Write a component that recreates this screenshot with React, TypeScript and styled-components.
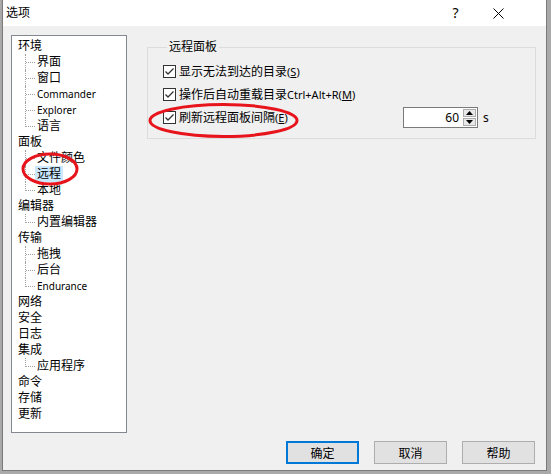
import React from "react";
import styled, { createGlobalStyle } from "styled-components";

const Global = createGlobalStyle`
  html, body { margin: 0; padding: 0; }
  body { background: #a9a9a9; font-family: "Noto Sans", "Noto Sans CJK SC", sans-serif; }
  #root { width: 551px; height: 474px; overflow: hidden; }
`;

const Desktop = styled.div`
  position: relative;
  width: 551px;
  height: 474px;
  padding-left: 2px;
  box-sizing: border-box;
  background: #a9a9a9;
`;

const Window = styled.div`
  width: 545px;
  height: 471px;
  box-sizing: border-box;
  border: 1px solid #7a7a7a;
  border-top: none;
  background: #f0f0f0;
  display: flex;
  flex-direction: column;
  font-family: "Noto Sans", "Noto Sans CJK SC", sans-serif;
  font-size: 12px;
  line-height: 16px;
  color: #000;
`;

const TitleBar = styled.div`
  height: 26px;
  flex-shrink: 0;
  background: #fff;
  display: flex;
  align-items: center;
  padding-left: 3px;
  padding-right: 26px;
`;

const TitleText = styled.span`
  font-size: 12px;
  line-height: 26px;
`;

const TitleButtons = styled.div`
  margin-left: auto;
  display: flex;
`;

const TitleButton = styled.div`
  width: 43px;
  height: 26px;
  display: flex;
  align-items: center;
  justify-content: center;
  font-size: 14px;
`;

const Body = styled.div`
  flex: 1;
  display: flex;
  flex-direction: column;
  padding: 9px 10px 0 8px;
`;

const Top = styled.div`
  display: flex;
  height: 398px;
`;

const Tree = styled.div`
  width: 116px;
  height: 398px;
  box-sizing: border-box;
  border: 1px solid #828790;
  background: #fff;
  padding: 2px 0 0 6px;
`;

const Row = styled.div<{ $child?: boolean }>`
  display: flex;
  align-items: center;
  height: 16px;
  margin-left: ${(p) => (p.$child ? "7px" : "0")};
`;

const Connector = styled.span<{ $last?: boolean }>`
  position: relative;
  width: 10px;
  height: 16px;
  flex-shrink: 0;
  &::before {
    content: "";
    position: absolute;
    left: 0;
    top: 0;
    height: ${(p) => (p.$last ? "9px" : "16px")};
    border-left: 1px dotted #a0a0a0;
  }
  &::after {
    content: "";
    position: absolute;
    left: 1px;
    top: 8px;
    width: 9px;
    border-top: 1px dotted #a0a0a0;
  }
`;

const NodeLabel = styled.span<{ $child?: boolean; $selected?: boolean }>`
  padding: ${(p) => (p.$child ? "0 2px" : "0")};
  line-height: 16px;
  white-space: nowrap;
  background: ${(p) => (p.$selected ? "#cce8ff" : "transparent")};
`;

const Latin = styled.span<{ $size: number }>`
  font-size: ${(p) => p.$size}px;
`;

const Main = styled.div`
  flex: 1;
  margin-left: 20px;
  padding-top: 4px;
`;

const Group = styled.fieldset`
  margin: 0;
  padding: 5px 0 9px 15px;
  border: 1px solid #dcdcdc;
  min-width: 0;
`;

const Legend = styled.legend`
  padding: 0 2px;
  margin-left: 4px;
  line-height: 16px;
`;

const OptionRow = styled.div`
  display: flex;
  align-items: center;
  height: 23px;
`;

const CheckBox = styled.span`
  width: 13px;
  height: 13px;
  box-sizing: border-box;
  border: 1px solid #333;
  background: #fff;
  margin-right: 3px;
  flex-shrink: 0;
  display: flex;
  align-items: center;
  justify-content: center;
`;

const CheckLabel = styled.span<{ $width?: number }>`
  white-space: nowrap;
  ${(p) => (p.$width ? `width: ${p.$width}px;` : "")}
`;

const SpinBox = styled.div`
  width: 75px;
  height: 21px;
  box-sizing: border-box;
  border: 1px solid #7a7a7a;
  background: #fff;
  display: flex;
  align-items: center;
  justify-content: flex-end;
`;

const SpinValue = styled.span`
  margin-right: 4px;
`;

const SpinButtons = styled.div`
  display: flex;
  flex-direction: column;
  gap: 1px;
  margin-right: 1px;
`;

const SpinArrow = styled.div`
  width: 13px;
  height: 8px;
  box-sizing: border-box;
  border: 1px solid #adadad;
  background: #e8e8e8;
  display: flex;
  align-items: center;
  justify-content: center;
`;

const Unit = styled.span`
  margin-left: 5px;
`;

const Footer = styled.div`
  display: flex;
  justify-content: flex-end;
  gap: 15px;
  margin-top: 8px;
  padding-right: 1px;
`;

const Button = styled.button<{ $default?: boolean }>`
  width: 73px;
  height: 23px;
  box-sizing: border-box;
  margin: 0;
  padding: 0;
  background: #e1e1e1;
  border: ${(p) => (p.$default ? "2px solid #0078d7" : "1px solid #adadad")};
  font-family: "Noto Sans", "Noto Sans CJK SC", sans-serif;
  font-size: 12px;
  color: #000;
`;

const Overlay = styled.svg`
  position: absolute;
  left: 0;
  top: 0;
  pointer-events: none;
`;

type Node = { label: string; children?: string[] };

const tree: Node[] = [
  { label: "环境", children: ["界面", "窗口", "Commander", "Explorer", "语言"] },
  { label: "面板", children: ["文件颜色", "远程", "本地"] },
  { label: "编辑器", children: ["内置编辑器"] },
  { label: "传输", children: ["拖拽", "后台", "Endurance"] },
  { label: "网络" },
  { label: "安全" },
  { label: "日志" },
  { label: "集成", children: ["应用程序"] },
  { label: "命令" },
  { label: "存储" },
  { label: "更新" },
];

const isLatin = (s: string) => /^[A-Za-z]+$/.test(s);

const Check = () => (
  <svg width="11" height="11" viewBox="0 0 11 11">
    <path d="M1.5 5.5 L4 8 L9.5 2.5" fill="none" stroke="#333" strokeWidth="1.3" />
  </svg>
);

const Arrow = ({ up }: { up?: boolean }) => (
  <svg width="7" height="4" viewBox="0 0 7 4">
    <path d={up ? "M0 4 L3.5 0 L7 4 Z" : "M0 0 L3.5 4 L7 0 Z"} fill="#000" />
  </svg>
);

export default function App() {
  return (
    <>
      <Global />
      <Desktop>
        <Window>
          <TitleBar>
            <TitleText>选项</TitleText>
            <TitleButtons>
              <TitleButton>?</TitleButton>
              <TitleButton>
                <svg width="11" height="11" viewBox="0 0 11 11">
                  <path d="M0.5 0.5 L10.5 10.5 M10.5 0.5 L0.5 10.5" stroke="#000" strokeWidth="1" />
                </svg>
              </TitleButton>
            </TitleButtons>
          </TitleBar>
          <Body>
            <Top>
              <Tree>
                {tree.map((n) => (
                  <React.Fragment key={n.label}>
                    <Row>
                      <NodeLabel>{n.label}</NodeLabel>
                    </Row>
                    {n.children?.map((c, i) => (
                      <Row $child key={c}>
                        <Connector $last={i === n.children!.length - 1} />
                        <NodeLabel $child $selected={c === "远程"}>
                          {isLatin(c) ? <Latin $size={10}>{c}</Latin> : c}
                        </NodeLabel>
                      </Row>
                    ))}
                  </React.Fragment>
                ))}
              </Tree>
              <Main>
                <Group>
                  <Legend>远程面板</Legend>
                  <OptionRow>
                    <CheckBox>
                      <Check />
                    </CheckBox>
                    <CheckLabel>
                      显示无法到达的目录
                      <Latin $size={11}>
                        (<u>S</u>)
                      </Latin>
                    </CheckLabel>
                  </OptionRow>
                  <OptionRow>
                    <CheckBox>
                      <Check />
                    </CheckBox>
                    <CheckLabel>
                      操作后自动重载目录
                      <Latin $size={11}>
                        Ctrl+Alt+R(<u>M</u>)
                      </Latin>
                    </CheckLabel>
                  </OptionRow>
                  <OptionRow>
                    <CheckBox>
                      <Check />
                    </CheckBox>
                    <CheckLabel $width={224}>
                      刷新远程面板间隔
                      <Latin $size={11}>
                        (<u>E</u>)
                      </Latin>
                    </CheckLabel>
                    <SpinBox>
                      <SpinValue>60</SpinValue>
                      <SpinButtons>
                        <SpinArrow>
                          <Arrow up />
                        </SpinArrow>
                        <SpinArrow>
                          <Arrow />
                        </SpinArrow>
                      </SpinButtons>
                    </SpinBox>
                    <Unit>s</Unit>
                  </OptionRow>
                </Group>
              </Main>
            </Top>
            <Footer>
              <Button $default>确定</Button>
              <Button>取消</Button>
              <Button>帮助</Button>
            </Footer>
          </Body>
        </Window>
        <Overlay width="551" height="474" viewBox="0 0 551 474">
          <ellipse cx="50" cy="169" rx="27" ry="15" fill="none" stroke="#e8141c" strokeWidth="3" />
          <ellipse cx="223.5" cy="120.5" rx="73.5" ry="16" fill="none" stroke="#e8141c" strokeWidth="3" />
        </Overlay>
      </Desktop>
    </>
  );
}
